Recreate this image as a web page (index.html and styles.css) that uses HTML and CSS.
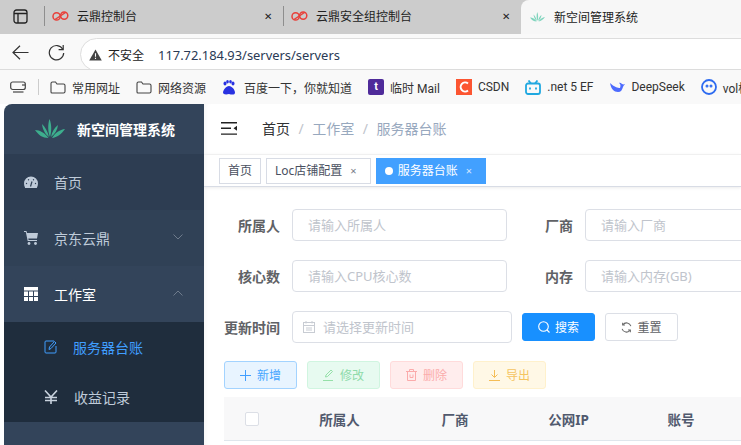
FILE: index.html
```html
<!DOCTYPE html>
<html lang="zh">
<head>
<meta charset="utf-8">
<title>新空间管理系统</title>
<link rel="stylesheet" href="styles.css">
</head>
<body>
<div class="tabstrip">
  <div class="tabside"><svg width="15" height="15" viewBox="0 0 15 15" fill="none" stroke="#222" stroke-width="1.3"><rect x="1" y="1" width="13" height="13" rx="2.5"/><path d="M1 4.5h13M5 4.5V14"/></svg></div>
  <div class="tab"><svg class="fav" width="17" height="10" viewBox="0 0 17 10" fill="none" stroke="#e8403a" stroke-width="1.5"><circle cx="4.6" cy="5.4" r="3.6"/><circle cx="12.2" cy="4.6" r="3.6"/><path d="M3 8.5 13.5 1.5"/></svg><span class="tabtext">云鼎控制台</span><span class="tabx">✕</span></div>
  <div class="tab tabsep"><svg class="fav" width="17" height="10" viewBox="0 0 17 10" fill="none" stroke="#e8403a" stroke-width="1.5"><circle cx="4.6" cy="5.4" r="3.6"/><circle cx="12.2" cy="4.6" r="3.6"/><path d="M3 8.5 13.5 1.5"/></svg><span class="tabtext">云鼎安全组控制台</span><span class="tabx">✕</span></div>
  <div class="tab tabon"><svg class="fav" width="15" height="10" viewBox="0 0 30 20" fill="#7fd4bd"><path d="M14.500 0c2.500 6 2 13 .5 18-2-5-2.500-12-.5-18zM7 5c3 3 6 8 7 13-4-3-6.500-8-7-13zM23 6c-.5 5-3 9-7 12 1-5 3.500-9.500 7-12zM0 11c5 0 10 3 13.500 8-6 0-10-3-13.500-8zM30 10c-3.500 5-8 8.500-13 9 3-5 8-8.500 13-9z"/></svg><span class="tabtext">新空间管理系统</span></div>
</div>
<div class="toolbar">
  <svg class="navback" width="17" height="15" viewBox="0 0 17 15" fill="none" stroke="#333" stroke-width="1.2"><path d="M16.5 7.5H1M8 .8 1 7.5l7 6.7"/></svg>
  <svg class="navre" width="17" height="17" viewBox="0 0 17 17" fill="none" stroke="#333" stroke-width="1.2"><path d="M14.8 5.2A7.2 7.2 0 1 0 15.7 9"/><path d="M15.2 1v4.6h-4.6"/></svg>
  <div class="omnibox">
    <svg width="13" height="12" viewBox="0 0 13 12"><path d="M6.5.5 12.8 11.5H.2z" fill="#444"/><path d="M6.5 4.2v3.6M6.5 8.8v1.2" stroke="#fff" stroke-width="1.1"/></svg>
    <span class="insecure">不安全</span>
    <span class="url">117.72.184.93/servers/servers</span>
  </div>
</div>
<div class="bookmarks">
  <svg class="bm-first" width="16" height="12" viewBox="0 0 16 12" fill="none" stroke="#444" stroke-width="1.2"><rect x=".7" y="1" width="14.6" height="7.5" rx="2"/><path d="M3 11h10.500"/><path d="M12 4h3"/></svg>
  <span class="bm-div"></span>
  <span class="bm"><svg width="16" height="13" viewBox="0 0 16 13" fill="none" stroke="#444" stroke-width="1.1"><path d="M1 11V2.500Q1 1 2.500 1H5.500L7 3H13.500Q15 3 15 4.500V10.500Q15 12 13.500 12H2Q1 12 1 11z"/></svg>常用网址</span>
  <span class="bm"><svg width="16" height="13" viewBox="0 0 16 13" fill="none" stroke="#444" stroke-width="1.1"><path d="M1 11V2.500Q1 1 2.500 1H5.500L7 3H13.500Q15 3 15 4.500V10.500Q15 12 13.500 12H2Q1 12 1 11z"/></svg>网络资源</span>
  <span class="bm bm-wide"><svg width="14" height="15" viewBox="0 0 14 15" fill="#2932e1"><ellipse cx="3" cy="3.500" rx="1.500" ry="2"/><ellipse cx="11" cy="3.500" rx="1.500" ry="2"/><ellipse cx="5.500" cy="1.800" rx="1.300" ry="1.800"/><ellipse cx="8.500" cy="1.800" rx="1.300" ry="1.800"/><path d="M7 6c3 0 6 4 6 6.500S10 15 7 14c-3 1-6 .5-6-1.500S4 6 7 6z"/></svg>百度一下，你就知道</span>
  <span class="bm"><span class="fv-t">t</span>临时 Mail</span>
  <span class="bm"><svg width="16" height="16" viewBox="0 0 16 16"><rect width="16" height="16" fill="#fc5531"/><path d="M12 4.500A4.500 4.500 0 1 0 12 11.500" fill="none" stroke="#fff" stroke-width="2"/></svg>CSDN</span>
  <span class="bm"><svg width="16" height="15" viewBox="0 0 16 15" fill="none" stroke="#20a8e0" stroke-width="1.800"><rect x="1" y="3.500" width="14" height="10.500" rx="2"/><path d="M3.500.5 6 3.500M12.500.5 10 3.500"/><path d="M5 7.500v2M11 7.500v2"/></svg>.net 5 EF</span>
  <span class="bm"><svg width="16" height="12" viewBox="0 0 16 12" fill="#4d6bfe"><path d="M1 2c1 6 4 9 8 9 3 0 4-2 5-5 .5-1.500 1.500-2 2-3-1 .5-2 .5-3 0-1-.8-2-1.500-3-1 2 1 1.500 4 1 5C9 7 5 6 1 2z"/></svg>DeepSeek</span>
  <span class="bm"><svg width="16" height="16" viewBox="0 0 16 16" fill="none" stroke="#2d6bf0" stroke-width="1.800"><circle cx="8" cy="8" r="7"/><circle cx="6" cy="7" r=".6"/><circle cx="10" cy="7" r=".6"/></svg>vol框架</span>
</div>
<div class="app">
  <aside class="sidebar">
    <div class="logo">
      <svg width="30" height="20" viewBox="0 0 30 20" fill="#3dae8d"><path d="M14.500 0c2.500 6 2 13 .5 18-2-5-2.500-12-.5-18zM7 5c3 3 6 8 7 13-4-3-6.500-8-7-13zM23 6c-.5 5-3 9-7 12 1-5 3.500-9.500 7-12zM0 11c5 0 10 3 13.500 8-6 0-10-3-13.500-8zM30 10c-3.500 5-8 8.500-13 9 3-5 8-8.500 13-9z"/></svg>
      <span class="logotext">新空间管理系统</span>
    </div>
    <div class="mi mi-home"><svg class="mi-ic" width="14" height="13" viewBox="0 0 14 13"><path d="M7 .5a7 7 0 0 1 7 7c0 1.600-.4 3.100-1.200 4.500H1.200C.4 10.600 0 9.100 0 7.500a7 7 0 0 1 7-7z" fill="#bfcbd9"/><path d="M6.500 10.500 8 5.500" stroke="#304156" stroke-width="1.200"/><circle cx="2.500" cy="7.500" r=".7" fill="#304156"/><circle cx="11.500" cy="7.500" r=".7" fill="#304156"/><circle cx="4.500" cy="3.800" r=".7" fill="#304156"/><circle cx="9.500" cy="3.800" r=".7" fill="#304156"/></svg>首页</div>
    <div class="mi"><svg class="mi-ic" width="14" height="14" viewBox="0 0 14 14" fill="#bfcbd9"><path d="M0 0h2.500l.5 2h11l-1 5.500H4.300l.3 1.500H13v1H3.700L1.800 1H0z"/><circle cx="5" cy="12.500" r="1.400"/><circle cx="11.500" cy="12.500" r="1.400"/></svg>京东云鼎<svg class="arrow" width="10" height="6" viewBox="0 0 10 6" fill="none" stroke="#6e7b8c"><path d="M.5.500 5 5 9.500.5"/></svg></div>
    <div class="mi mi-open"><svg class="mi-ic" width="14" height="14" viewBox="0 0 14 14" fill="#fff"><path d="M0 0h14v3.500H0zM0 4.500h4V9H0zM5 4.500h4V9H5zM10 4.500h4V9h-4zM0 10h4v4H0zM5 10h4v4H5zM10 10h4v4h-4z"/></svg>工作室<svg class="arrow" width="10" height="6" viewBox="0 0 10 6" fill="none" stroke="#6e7b8c"><path d="M.5 5.500 5 1l4.500 4.500"/></svg></div>
    <div class="submenu">
      <div class="si si-on"><svg class="si-ic" width="13" height="14" viewBox="0 0 13 14" fill="none" stroke="#409eff"><path d="M10 1H2Q1 1 1 2v10q0 1 1 1h9q1 0 1-1V6"/><path d="M5 9.500l.5-2.500 5-5.500 1.500 1.500-5 5.500z"/></svg>服务器台账</div>
      <div class="si"><svg class="si-ic" width="14" height="14" viewBox="0 0 14 14" fill="none" stroke="#c8d2de" stroke-width="1.600"><path d="M1 .5 7 7l6-6.500M7 7v7M1 7.500h12M1 10.500h12"/></svg>收益记录</div>
    </div>
    <div class="mi mi-last"><svg class="mi-ic" width="14" height="14" viewBox="0 0 14 14" fill="#bfcbd9"><path d="M6 0h2v14H6zM1 6h2v8H1zM11 3h2v11h-2z"/></svg></div>
  </aside>
  <main class="main">
    <div class="crumbbar">
      <svg width="16" height="13" viewBox="0 0 16 13" fill="#222"><path d="M0 0h16v1.400H0zM0 5.600h10V7H0zM0 11.400h16v1.400H0zM16 3.800v5l-3.500-2.500z"/></svg>
      <span class="crumb crumb-first">首页</span><span class="crumb-sep">/</span><span class="crumb">工作室</span><span class="crumb-sep">/</span><span class="crumb">服务器台账</span>
    </div>
    <div class="tags">
      <span class="tag">首页</span>
      <span class="tag">Loc店铺配置<i class="tag-x">×</i></span>
      <span class="tag tag-on"><i class="tag-dot"></i>服务器台账<i class="tag-x">×</i></span>
    </div>
    <div class="content">
      <form class="query">
        <div class="row">
          <label class="lbl">所属人</label><div class="inp inp-a">请输入所属人</div>
          <label class="lbl lbl-b">厂商</label><div class="inp inp-b">请输入厂商</div>
        </div>
        <div class="row">
          <label class="lbl">核心数</label><div class="inp inp-a">请输入CPU核心数</div>
          <label class="lbl lbl-b">内存</label><div class="inp inp-b">请输入内存(GB)</div>
        </div>
        <div class="row row-last">
          <label class="lbl">更新时间</label>
          <div class="inp inp-date"><svg width="12" height="12" viewBox="0 0 12 12" fill="none" stroke="#c8ccd3"><rect x=".5" y="1.500" width="11" height="10"/><path d="M.5 4.500h11M3 0v2.500M9 0v2.500M3 7h6M3 9h6"/></svg>请选择更新时间</div>
          <button type="button" class="btn btn-search"><svg width="12" height="12" viewBox="0 0 12 12" fill="none" stroke="#fff" stroke-width="1.100"><circle cx="5.500" cy="5.500" r="4.800"/><path d="M9 9l2.500 2.500"/></svg>搜索</button>
          <button type="button" class="btn btn-reset"><svg width="11" height="11" viewBox="0 0 12 12" fill="none" stroke="#666" stroke-width="1.100"><path d="M10.800 4.500A5 5 0 0 0 2 3M1.200 7.500A5 5 0 0 0 10 9"/><path d="M1.800.8V3.300H4.300M10.200 11.200V8.700H7.700"/></svg>重置</button>
        </div>
      </form>
      <div class="actions">
        <button type="button" class="act act-blue"><svg width="11" height="11" viewBox="0 0 11 11" stroke="#409eff"><path d="M5.500 0v11M0 5.500h11"/></svg>新增</button>
        <button type="button" class="act act-green"><svg width="11" height="12" viewBox="0 0 11 12" fill="none" stroke="#95e0a8"><path d="M2.500 8 3 6l5-5 1.500 1.500-5 5zM0 11.500h10"/></svg>修改</button>
        <button type="button" class="act act-red"><svg width="11" height="12" viewBox="0 0 11 12" fill="none" stroke="#fbabab"><path d="M0 2.500h11M3.500 2.500V.5h4v2M1.500 2.500v9h8v-9M4 5.500v3h3v-3"/></svg>删除</button>
        <button type="button" class="act act-yellow"><svg width="11" height="11" viewBox="0 0 11 11" fill="none" stroke="#f5bd55"><path d="M5.500 0v7M2.500 4.500l3 3 3-3M0 10.500h11"/></svg>导出</button>
      </div>
      <div class="thead">
        <div class="th-check"><span class="check"></span></div>
        <div class="th">所属人</div>
        <div class="th">厂商</div>
        <div class="th">公网IP</div>
        <div class="th">账号</div>
      </div>
    </div>
  </main>
</div>
</body>
</html>
```
FILE: styles.css
```css
* { box-sizing: border-box; }
html, body { margin: 0; height: 445px; overflow: hidden; background: #fff; }
body { font-family: "Noto Sans", "Noto Sans CJK SC", sans-serif; font-size: 14px; color: #333; }

.tabstrip { display: flex; height: 34px; background: #ccc; }
.tabside { width: 44px; padding: 9px 0 0 13px; }
.tab { width: 239px; display: flex; align-items: center; padding-left: 7px; font-size: 12px; color: #222; border-left: 1px solid #8e8e8e; height: 20px; margin-top: 6px; }
.tabtext { margin-left: 8px; flex: 1; }
.tabx { font-size: 10px; margin-right: 11px; color: #222; }
.tabon { flex: 1; border: 0; height: 34px; margin-top: 0; background: #f7f7f7; border-radius: 8px 0 0 0; padding-left: 9px; }
.tabon .tabtext { margin-left: 9px; }
.tabsep { width: 238px; }

.toolbar { height: 36px; background: #f9f9f9; display: flex; align-items: center; padding-top: 2px; border-bottom: 1px solid #dcdcdc; overflow: hidden; }
.navback { margin-left: 12px; }
.navre { margin-left: 19px; }
.omnibox { flex: 1; height: 33px; margin: 4px -30px 0 15px; background: #fff; border: 1px solid #ddd; border-radius: 17px 0 0 17px; display: flex; align-items: center; padding-left: 8px; font-size: 12px; }
.insecure { margin-left: 6px; color: #222; }
.url { margin-left: 14px; font-size: 12.900px; color: #2a3a55; }

.bookmarks { height: 34px; background: #f9f9f9; display: flex; align-items: center; font-family: "Roboto", "Noto Sans CJK SC", sans-serif; font-size: 12px; color: #333; white-space: nowrap; overflow: hidden; }
.bm-first { margin-left: 10px; flex: none; }
.bm-div { width: 1px; height: 16px; background: #ccc; margin: 0 11px 0 12px; flex: none; }
.bm { display: inline-flex; align-items: center; gap: 6px; margin-right: 16px; flex: none; }
.bm-wide { gap: 8px; }
.bm svg { flex: none; }
.fv-t { width: 16px; height: 16px; background: #4f2b9a; color: #fff; font-size: 11px; font-weight: 700; border-radius: 2px; text-align: center; line-height: 15px; }

.app { display: flex; height: 341px; padding-left: 4px; }
.sidebar { width: 200px; background: #33445a; border-radius: 8px 0 0 0; overflow: hidden; flex: none; }
.logo { height: 50px; display: flex; align-items: center; padding-left: 31px; gap: 12px; }
.logotext { color: #fff; font-size: 14px; font-weight: 700; }
.mi { height: 56px; display: flex; align-items: center; padding-left: 20px; color: #bfcbd9; position: relative; background: #304156; }
.mi-home { background: #2d3d52; }
.mi-open { background: #33445a; color: #fff; }
.mi-last { background: #33445a; padding-top: 42px; }
.mi-ic { margin-right: 16px; flex: none; }
.arrow { position: absolute; right: 21px; top: 24px; }
.submenu { background: #1f2d3d; }
.si { height: 50px; display: flex; align-items: center; padding-left: 40px; color: #bfcbd9; }
.si-on { color: #409eff; }
.si-ic { margin-right: 16px; flex: none; }

.main { flex: 1; min-width: 0; overflow: hidden; box-shadow: inset 6px 0 6px -5px rgba(0,0,0,.05); }
.crumbbar { height: 50px; display: flex; align-items: center; padding: 0 0 2px 17px; color: #97a8be; }
.crumb-first { margin-left: 25px; color: #303133; }
.crumb-sep { margin: 0 8.500px; color: #c0c4cc; }
.tags { height: 33px; display: flex; gap: 5px; padding: 3px 0 0 15px; border-top: 1px solid #f0f0f0; border-bottom: 1px solid #d8dce5; box-shadow: 0 1px 3px rgba(0,0,0,.08); }
.tag { height: 26px; border: 1px solid #d8dce5; padding: 0 8px; font-size: 12px; line-height: 24px; color: #495060; background: #fff; display: inline-flex; align-items: center; white-space: nowrap; }
.tag-on { background: #42a0ff; border-color: #42a0ff; color: #fff; }
.tag-dot { width: 8px; height: 8px; border-radius: 50%; background: #fff; margin-right: 5px; }
.tag-x { font-style: normal; font-size: 11px; margin: 0 5px 0 8px; opacity: .75; }

.content { padding: 22px 0 0 20px; width: 600px; }
.row { display: flex; height: 32px; margin-bottom: 19px; align-items: center; }
.row-last { margin-bottom: 18px; }
.lbl { width: 56px; text-align: right; color: #606266; font-weight: 700; margin-right: 12px; flex: none; white-space: nowrap; }
.lbl-b { margin-left: 10px; }
.inp { height: 32px; border: 1px solid #dcdfe6; border-radius: 4px; color: #c0c4cc; font-size: 13px; line-height: 30px; padding-left: 15px; background: #fff; flex: none; white-space: nowrap; }
.inp-a { width: 215px; }
.inp-b { width: 300px; }
.inp-date { width: 220px; padding-left: 10px; display: flex; align-items: center; gap: 8px; }
.btn { height: 28px; width: 73px; border-radius: 3px; font: inherit; font-size: 12px; display: inline-flex; align-items: center; justify-content: center; gap: 5px; padding: 0; flex: none; }
.btn-search { background: #1890ff; border: 1px solid #1890ff; color: #fff; margin-left: 10px; }
.btn-reset { background: #fff; border: 1px solid #dcdfe6; color: #606266; margin-left: 10px; }
.actions { display: flex; gap: 10px; height: 28px; }
.act { width: 73px; height: 28px; border-radius: 3px; font: inherit; font-size: 12px; display: inline-flex; align-items: center; justify-content: center; gap: 6px; padding: 0; }
.act-blue { background: #e8f4ff; border: 1px solid #a3d3ff; color: #46a6ff; }
.act-green { background: #e7faf0; border: 1px solid #d0f5e0; color: #8fdbaa; }
.act-red { background: #ffeded; border: 1px solid #ffdbdb; color: #fbacac; }
.act-yellow { background: #fff8e6; border: 1px solid #fff1cc; color: #f5c461; }
.thead { margin-top: 8px; width: 540px; height: 44px; background: #f8f8f9; border-bottom: 1px solid #dfe6ec; display: grid; grid-template-columns: 59px 113px 118px 109px 116px; align-items: center; color: #515a6e; font-weight: 700; font-size: 13.500px; }
.th { text-align: center; white-space: nowrap; }
.th-check { padding-left: 21px; display: flex; }
.check { width: 14px; height: 14px; border: 1px solid #dcdfe6; border-radius: 2px; background: #fff; }
```
